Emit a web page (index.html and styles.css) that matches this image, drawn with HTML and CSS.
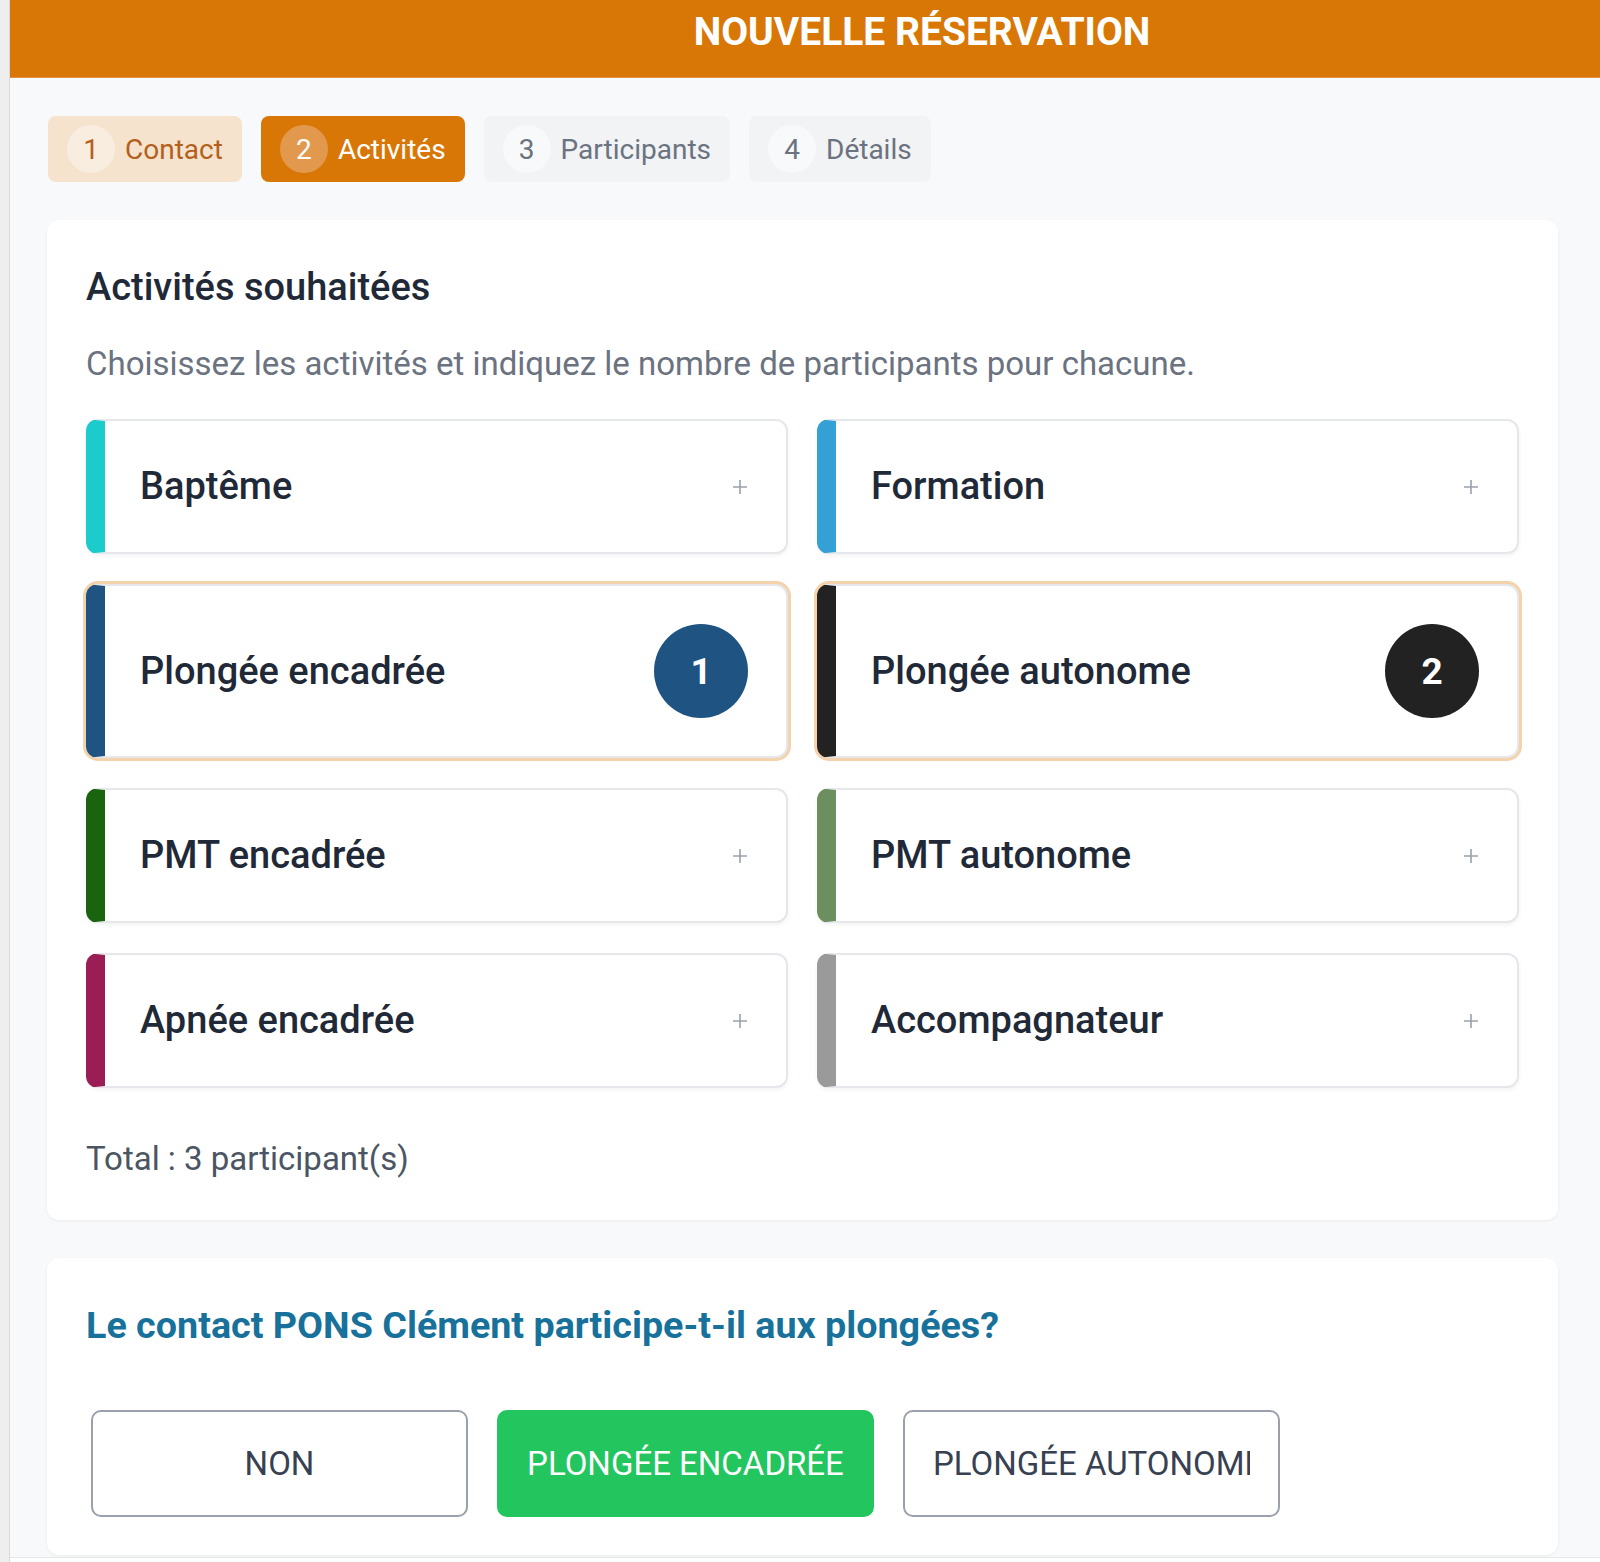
FILE: index.html
```html
<!DOCTYPE html>
<html lang="fr">
<head>
<meta charset="utf-8">
<title>Nouvelle réservation</title>
<link rel="stylesheet" href="styles.css">
</head>
<body>
<div class="app">
  <div class="rail"></div>
  <div class="main">
    <header class="topbar"><h1>NOUVELLE RÉSERVATION</h1></header>
    <div class="content">
      <nav class="steps">
        <div class="step done"><span class="num">1</span><span>Contact</span></div>
        <div class="step active"><span class="num">2</span><span>Activités</span></div>
        <div class="step"><span class="num">3</span><span>Participants</span></div>
        <div class="step"><span class="num">4</span><span>Détails</span></div>
      </nav>

      <section class="panel activities">
        <h2>Activités souhaitées</h2>
        <p class="hint">Choisissez les activités et indiquez le nombre de participants pour chacune.</p>
        <div class="grid">
          <div class="act c-bapteme"><span class="name">Baptême</span><svg class="plus" viewBox="0 0 16 16"><path d="M8 1v14M1 8h14"/></svg></div>
          <div class="act c-formation"><span class="name">Formation</span><svg class="plus" viewBox="0 0 16 16"><path d="M8 1v14M1 8h14"/></svg></div>
          <div class="act c-plongee-enc selected"><span class="name">Plongée encadrée</span><span class="badge">1</span></div>
          <div class="act c-plongee-auto selected"><span class="name">Plongée autonome</span><span class="badge">2</span></div>
          <div class="act c-pmt-enc"><span class="name">PMT encadrée</span><svg class="plus" viewBox="0 0 16 16"><path d="M8 1v14M1 8h14"/></svg></div>
          <div class="act c-pmt-auto"><span class="name">PMT autonome</span><svg class="plus" viewBox="0 0 16 16"><path d="M8 1v14M1 8h14"/></svg></div>
          <div class="act c-apnee"><span class="name">Apnée encadrée</span><svg class="plus" viewBox="0 0 16 16"><path d="M8 1v14M1 8h14"/></svg></div>
          <div class="act c-accomp"><span class="name">Accompagnateur</span><svg class="plus" viewBox="0 0 16 16"><path d="M8 1v14M1 8h14"/></svg></div>
        </div>
        <p class="total">Total : 3 participant(s)</p>
      </section>

      <section class="panel question">
        <h3>Le contact PONS Clément participe-t-il aux plongées?</h3>
        <div class="choices">
          <button class="choice"><span>NON</span></button>
          <button class="choice chosen"><span>PLONGÉE ENCADRÉE</span></button>
          <button class="choice"><span>PLONGÉE AUTONOME</span></button>
        </div>
      </section>
    </div>
    <div class="footer"></div>
  </div>
</div>
</body>
</html>
```

FILE: styles.css
```css
* { box-sizing: border-box; }

html, body {
  margin: 0;
  height: 100%;
  overflow: hidden;
}

body {
  font-family: Roboto, "Liberation Sans", sans-serif;
  background: #f8f9fa;
}

.app {
  display: flex;
  min-height: 1562px;
}

.rail {
  width: 10px;
  flex: none;
  background: #eeeeee;
  border-right: 1px solid #d9d9d9;
}

.main {
  flex: 1;
  min-width: 0;
}

.topbar {
  height: 78px;
  background: #d97706;
  border-bottom: 1px solid #e39143;
  padding: 9px 0 0 234px;
  text-align: center;
}

.topbar h1 {
  margin: 0;
  font-size: 39px;
  font-weight: 700;
  color: #ffffff;
  line-height: normal;
}

.content {
  padding: 38px 0 0 37px;
}

/* Steps */
.steps {
  display: flex;
  gap: 19px;
  margin-left: 1px;
}

.step {
  display: flex;
  align-items: center;
  gap: 10px;
  height: 66px;
  padding: 0 19px;
  border-radius: 8px;
  font-size: 28px;
  background: #f1f3f5;
  color: #6b7280;
}

.num {
  width: 48px;
  height: 48px;
  border-radius: 50%;
  display: flex;
  align-items: center;
  justify-content: center;
  background: #f8f9fa;
}

.step.done {
  background: #f5e3ce;
  color: #b45f1c;
}

.step.done .num {
  background: #f9ede0;
}

.step.active {
  background: #d97706;
  color: #ffffff;
}

.step.active .num {
  background: #e3994d;
}

/* Panels */
.panel {
  width: 1511px;
  background: #ffffff;
  border-radius: 12px;
  box-shadow: 0 1px 3px rgba(0, 0, 0, 0.06);
}

.activities {
  margin-top: 38px;
  padding: 45px 39px 42px;
}

.activities h2 {
  margin: 0;
  font-size: 38px;
  font-weight: 500;
  color: #1f2937;
  line-height: normal;
}

.hint {
  margin: 35px 0 0;
  font-size: 33px;
  color: #6b7280;
  line-height: normal;
}

.grid {
  margin-top: 36px;
  display: grid;
  grid-template-columns: 1fr 1fr;
  gap: 30px 29px;
}

.act {
  display: flex;
  align-items: center;
  justify-content: space-between;
  background: #ffffff;
  border: 2px solid #e5e7eb;
  border-left: 19px solid #999999;
  border-radius: 12px;
  padding: 38px 38px 38px 35px;
  box-shadow: 0 2px 4px rgba(0, 0, 0, 0.05);
}

.act.selected {
  box-shadow: 0 0 0 3px #f4d2ab, 0 2px 4px rgba(0, 0, 0, 0.05);
}

.name {
  font-size: 38px;
  font-weight: 500;
  color: #1f2937;
  line-height: 55px;
}

.plus {
  width: 16px;
  height: 16px;
  fill: none;
  stroke: #9aa1ad;
  stroke-width: 1.6;
}

.badge {
  width: 94px;
  height: 94px;
  border-radius: 50%;
  display: flex;
  align-items: center;
  justify-content: center;
  color: #ffffff;
  font-size: 37px;
  font-weight: 700;
}

.c-bapteme { border-left-color: #1ccbcc; }
.c-formation { border-left-color: #34a0d6; }
.c-plongee-enc { border-left-color: #1f5482; }
.c-plongee-auto { border-left-color: #222222; }
.c-pmt-enc { border-left-color: #1a6410; }
.c-pmt-auto { border-left-color: #6d8e5e; }
.c-apnee { border-left-color: #9b1d55; }
.c-accomp { border-left-color: #9a9a9a; }

.c-plongee-enc .badge { background: #1f5482; }
.c-plongee-auto .badge { background: #222222; }

.total {
  margin: 51px 0 0;
  font-size: 33px;
  color: #4b5563;
  line-height: normal;
}

/* Question */
.question {
  margin-top: 38px;
  padding: 45px 39px 38px;
}

.question h3 {
  margin: 0;
  font-size: 37.7px;
  font-weight: 700;
  color: #17719a;
  line-height: normal;
}

.choices {
  display: flex;
  gap: 29px;
  margin-top: 63px;
  padding-left: 5px;
}

.choice {
  width: 377px;
  height: 107px;
  border: 2px solid #9aa1ad;
  border-radius: 10px;
  background: #ffffff;
  font-family: inherit;
  font-size: 33px;
  font-weight: 400;
  color: #374151;
  padding: 0 28px;
  display: flex;
  align-items: center;
  justify-content: center;
}

.choice span {
  overflow: hidden;
  white-space: nowrap;
  min-width: 0;
}

.choice.chosen {
  background: #22c55e;
  border-color: #22c55e;
  color: #ffffff;
}

.choice.chosen span {
  overflow: visible;
}

.footer {
  margin-top: 2px;
  border-top: 1px solid #e5e7eb;
  height: 40px;
  background: #ffffff;
}
```
